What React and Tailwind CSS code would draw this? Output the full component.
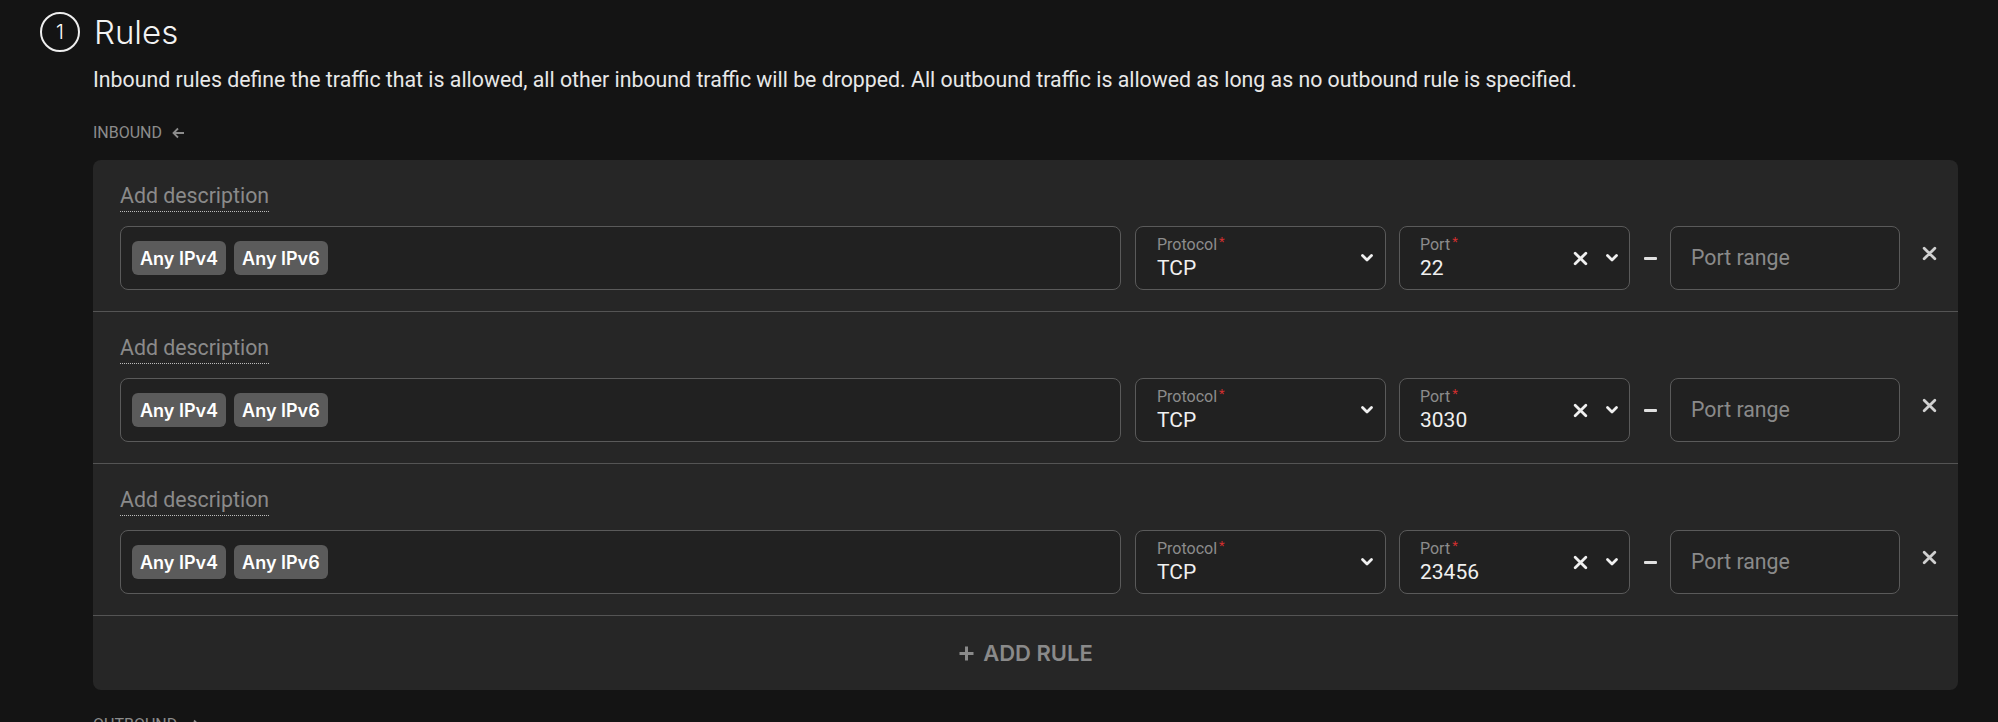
import React from "react";

const ports = ["22", "3030", "23456"];

function Chevron() {
  return (
    <svg width="14" height="10" viewBox="0 0 14 10" fill="none">
      <path d="M2.5 2.5 L7 7 L11.5 2.5" stroke="#f0f0f0" strokeWidth="2.8" strokeLinecap="round" strokeLinejoin="round" />
    </svg>
  );
}

function XIcon({ size = 14, color = "#f0f0f0", sw = 2.6 }) {
  return (
    <svg width={size} height={size} viewBox="0 0 14 14" fill="none">
      <path d="M2 2 L12 12 M12 2 L2 12" stroke={color} strokeWidth={sw} strokeLinecap="round" />
    </svg>
  );
}

function Label({ children }) {
  return (
    <div className="text-[16px] leading-[18px] text-[#8c8c8c]">
      {children}
      <span className="text-[#d32f2f] text-[13px] align-top relative -top-[3px] ml-[2px]">*</span>
    </div>
  );
}

function Chip({ children }) {
  return (
    <span className="h-[34px] px-[8px] rounded-[6px] bg-[#5b5b5b] flex items-center text-[18px] font-semibold text-white font-['Inter',sans-serif]">
      {children}
    </span>
  );
}

function Row({ port }) {
  return (
    <div className="flex flex-col border-b border-[#545454] pl-[27px] pt-[24px] pb-[21px]">
      <div>
        <span className="inline-block text-[21.3px] leading-[24px] text-[#8a8a8a] pb-[3px] border-b border-dotted border-[#bdbdbd]">
          Add description
        </span>
      </div>
      <div className="flex items-center mt-[14px]">
        <div className="flex-1 h-[64px] rounded-[8px] border border-[#5a5a5a] bg-[#212121] flex items-center gap-[8px] pl-[11px]">
          <Chip>Any IPv4</Chip>
          <Chip>Any IPv6</Chip>
        </div>
        <div className="ml-[14px] w-[251px] h-[64px] rounded-[8px] border border-[#5a5a5a] bg-[#212121] flex items-center pl-[21px] pr-[11px]">
          <div className="flex-1 flex flex-col">
            <Label>Protocol</Label>
            <div className="text-[21px] leading-[24px] text-[#f0f0f0] mt-[2px]">TCP</div>
          </div>
          <Chevron />
        </div>
        <div className="ml-[13px] w-[231px] h-[64px] rounded-[8px] border border-[#5a5a5a] bg-[#212121] flex items-center pl-[20px] pr-[10px]">
          <div className="flex-1 flex flex-col">
            <Label>Port</Label>
            <div className="text-[21px] leading-[24px] text-[#f0f0f0] mt-[2px]">{port}</div>
          </div>
          <div className="flex items-center gap-[17px]">
            <XIcon size={15} />
            <Chevron />
          </div>
        </div>
        <div className="w-[40px] flex justify-center">
          <div className="w-[13px] h-[3px] bg-[#e0e0e0] rounded-[1px]" />
        </div>
        <div className="w-[230px] h-[64px] rounded-[8px] border border-[#5a5a5a] bg-[#212121] flex items-center pl-[20px] text-[21.3px] text-[#8a8a8a]">
          Port range
        </div>
        <div className="w-[58px] flex justify-center -mt-[9px]">
          <XIcon size={15} color="#d0d0d0" sw={2.6} />
        </div>
      </div>
    </div>
  );
}

export default function App() {
  return (
    <div className="min-h-screen bg-[#141414] text-white pl-[40px] pr-[40px] pt-[12px] overflow-hidden font-['Roboto',sans-serif]">
      <div className="flex items-center gap-[14px] h-[40px]">
        <div className="w-[40px] h-[40px] rounded-full border-2 border-[#eeeeee] flex items-center justify-center text-[20px] font-light font-['Inter',sans-serif]">
          1
        </div>
        <h1 className="text-[33px] leading-none font-light font-['Inter',sans-serif] text-[#f2f2f2]">Rules</h1>
      </div>
      <div className="ml-[53px]">
        <p className="mt-[16px] text-[21.3px] leading-[24px] text-[#e8e8e8]">
          Inbound rules define the traffic that is allowed, all other inbound traffic will be dropped. All outbound traffic is allowed as long as no outbound rule is specified.
        </p>
        <div className="mt-[32px] flex items-center gap-[10px] text-[16px] leading-[18px] text-[#8c8c8c]">
          <span>INBOUND</span>
          <svg width="13" height="12" viewBox="0 0 13 12" fill="none">
            <path d="M12 6 H2 M6 1.5 L1.5 6 L6 10.5" stroke="#8c8c8c" strokeWidth="1.8" />
          </svg>
        </div>
        <div className="mt-[18px] rounded-[8px] bg-[#262626]">
          {ports.map((p) => (
            <Row key={p} port={p} />
          ))}
          <div className="h-[74px] flex items-center justify-center gap-[8px] text-[#8a8a8a] font-['Inter',sans-serif]">
            <svg width="17" height="17" viewBox="0 0 17 17" fill="none">
              <path d="M8.5 1.5 V15.5 M1.5 8.5 H15.5" stroke="#8a8a8a" strokeWidth="3" />
            </svg>
            <span className="text-[22px] font-semibold">ADD RULE</span>
          </div>
        </div>
        <div className="mt-[26px] flex items-center gap-[10px] text-[16px] leading-[18px] text-[#8c8c8c]">
          <span>OUTBOUND</span>
          <svg width="13" height="12" viewBox="0 0 13 12" fill="none">
            <path d="M1 6 H11 M7 1.5 L11.5 6 L7 10.5" stroke="#8c8c8c" strokeWidth="1.8" />
          </svg>
        </div>
        <div className="h-[40px]" />
      </div>
    </div>
  );
}
